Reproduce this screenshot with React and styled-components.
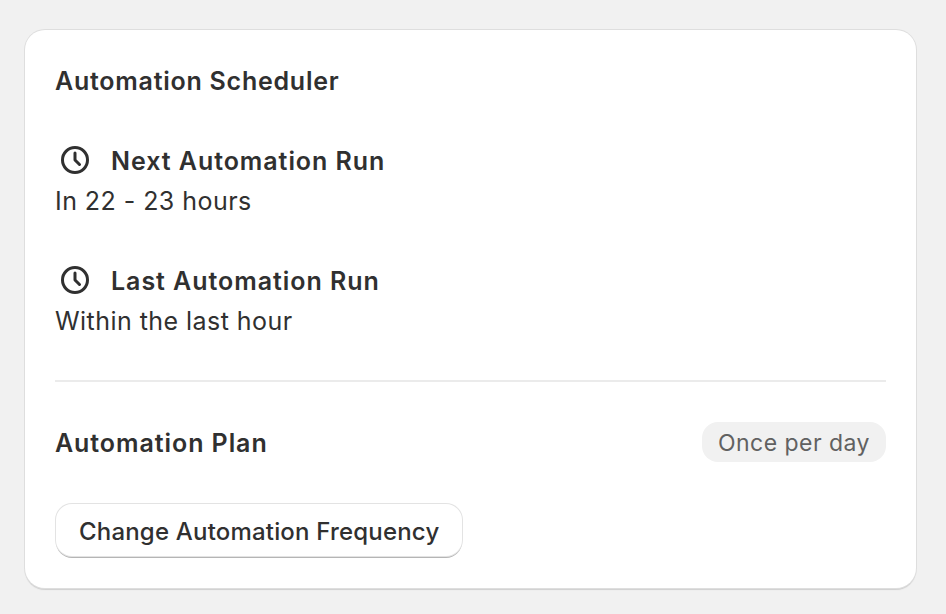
import React from 'react'
import styled, { createGlobalStyle } from 'styled-components'

const GlobalStyle = createGlobalStyle`
  html, body {
    margin: 0;
    background: #f1f1f1;
    font-family: Inter, "Liberation Sans", sans-serif;
    color: #303030;
  }
`

const Page = styled.main`
  box-sizing: border-box;
  width: 946px;
  height: 614px;
  padding: 30px 30px 0 25px;
`

const Card = styled.section`
  box-sizing: border-box;
  height: 558px;
  padding: 31px 30px 30px 30px;
  background: #fff;
  border-radius: 20px;
  box-shadow: 0 0 0 1px #dedede, 0 2px 1px 0 #cfcfcf;
`

const Title = styled.h2`
  margin: 0 0 40px;
  font-size: 25px;
  line-height: 40px;
  font-weight: 600;
  letter-spacing: 0.75px;
`

const RunBlock = styled.div`
  margin-bottom: 40px;
`

const RunHeading = styled.div`
  display: flex;
  align-items: center;
  gap: 21px;
  height: 40px;
  padding-left: 5px;
  font-size: 25px;
  font-weight: 600;
  letter-spacing: 0.95px;

  svg {
    margin-top: -2px;
  }
`

const RunText = styled.p`
  margin: 0;
  font-size: 25px;
  line-height: 40px;
  font-weight: 400;
  letter-spacing: 0.45px;
`

const Divider = styled.hr`
  margin: -1px 0 0;
  border: 0;
  height: 2px;
  background: #ebebeb;
`

const PlanRow = styled.div`
  display: flex;
  align-items: center;
  justify-content: space-between;
  margin-top: 40px;
  height: 40px;
`

const PlanTitle = styled.h3`
  margin: 0;
  padding-top: 2px;
  font-size: 25px;
  font-weight: 600;
  letter-spacing: 0.93px;
`

const Badge = styled.span`
  padding: 0 16px;
  height: 40px;
  line-height: 42px;
  border-radius: 16px;
  background: #f1f1f1;
  color: #616161;
  font-size: 23px;
  letter-spacing: 0.47px;
`

const Button = styled.button`
  display: block;
  margin: 42px 0 0 1px;
  height: 52px;
  padding: 2px 23px 0;
  border: 0;
  border-radius: 16px;
  background: #fff;
  color: #303030;
  font-family: inherit;
  font-size: 24px;
  font-weight: 450;
  letter-spacing: 0.19px;
  box-shadow: 0 0 0 1px #e3e3e3, 0 2px 0 0 #b5b5b5;
`

const ClockIcon = () => (
  <svg width="30" height="30" viewBox="0 0 30 30" fill="none" stroke="#303030" strokeWidth="3" strokeLinecap="round" strokeLinejoin="round">
    <circle cx="15" cy="15" r="12.5" />
    <path d="M15 8v7l4.5 4.5" />
  </svg>
)

export default function App() {
  return (
    <Page>
      <GlobalStyle />
      <Card>
        <Title>Automation Scheduler</Title>
        <RunBlock>
          <RunHeading><ClockIcon />Next Automation Run</RunHeading>
          <RunText>In 22 - 23 hours</RunText>
        </RunBlock>
        <RunBlock>
          <RunHeading><ClockIcon />Last Automation Run</RunHeading>
          <RunText>Within the last hour</RunText>
        </RunBlock>
        <Divider />
        <PlanRow>
          <PlanTitle>Automation Plan</PlanTitle>
          <Badge>Once per day</Badge>
        </PlanRow>
        <Button>Change Automation Frequency</Button>
      </Card>
    </Page>
  )
}
